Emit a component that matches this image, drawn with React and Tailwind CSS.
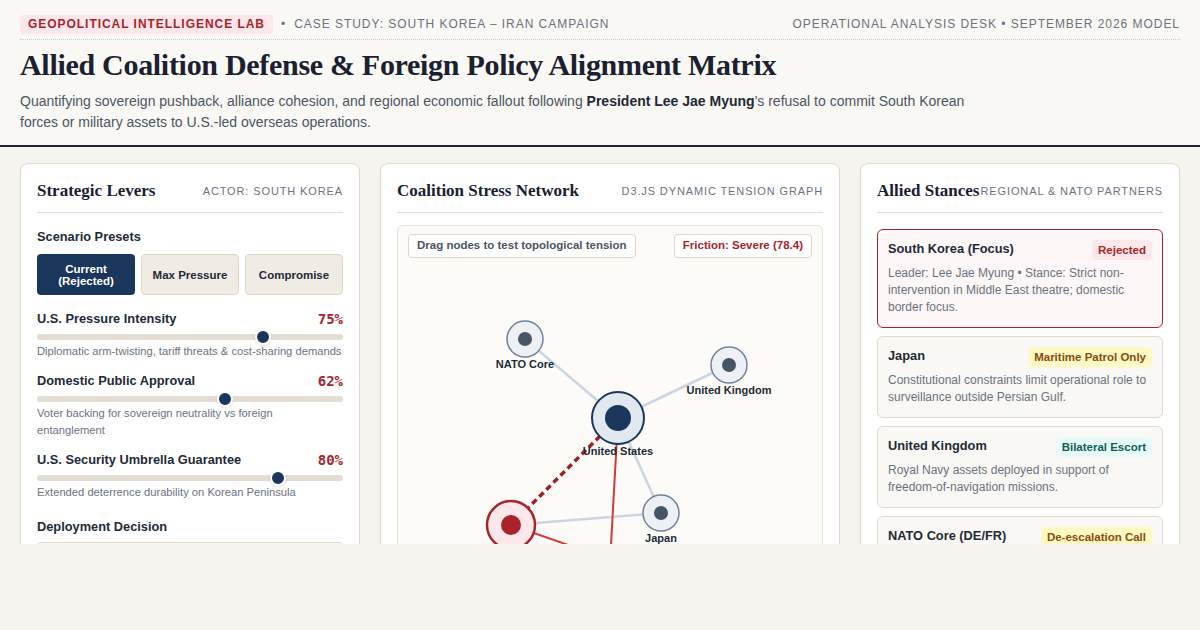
import React from "react";

const sans = { fontFamily: "'Liberation Sans', Arial, sans-serif" };
const serif = { fontFamily: "'Liberation Serif', 'Times New Roman', serif" };

const presets = ["Current (Rejected)", "Max Pressure", "Compromise"];

const levers = [
  {
    label: "U.S. Pressure Intensity",
    value: 75,
    note: "Diplomatic arm-twisting, tariff threats & cost-sharing demands",
  },
  {
    label: "Domestic Public Approval",
    value: 62,
    note: "Voter backing for sovereign neutrality vs foreign entanglement",
  },
  {
    label: "U.S. Security Umbrella Guarantee",
    value: 80,
    note: "Extended deterrence durability on Korean Peninsula",
  },
];

const stances = [
  {
    name: "South Korea (Focus)",
    badge: "Rejected",
    badgeCls: "bg-[#fce8ea] text-[#a8242b]",
    text: "Leader: Lee Jae Myung • Stance: Strict non-intervention in Middle East theatre; domestic border focus.",
    focus: true,
  },
  {
    name: "Japan",
    badge: "Maritime Patrol Only",
    badgeCls: "bg-[#fef9c3] text-[#854d0e]",
    text: "Constitutional constraints limit operational role to surveillance outside Persian Gulf.",
  },
  {
    name: "United Kingdom",
    badge: "Bilateral Escort",
    badgeCls: "bg-[#e6fbf7] text-[#115e59]",
    text: "Royal Navy assets deployed in support of freedom-of-navigation missions.",
  },
  {
    name: "NATO Core (DE/FR)",
    badge: "De-escalation Call",
    badgeCls: "bg-[#fef9c3] text-[#854d0e]",
    text: "Urging diplomatic off-ramps and multilateral de-escalation through E3 channels.",
  },
];

// graph positions, relative to the graph box
const nodes = [
  { id: "nato", label: "NATO Core", x: 127, y: 113, r: 18 },
  { id: "uk", label: "United Kingdom", x: 331, y: 139, r: 18 },
  { id: "us", label: "United States", x: 220, y: 192, r: 26, kind: "hub" },
  { id: "jp", label: "Japan", x: 263, y: 287, r: 18 },
  { id: "kr", label: "South Korea", x: 113, y: 299, r: 24, kind: "focus" },
  { id: "ir", label: "Iran", x: 330, y: 375, r: 22, kind: "focus" },
  { id: "gulf", label: "Gulf Shipping", x: 208, y: 410, r: 18 },
];

const links = [
  { a: "nato", b: "us", type: "soft" },
  { a: "uk", b: "us", type: "soft" },
  { a: "us", b: "jp", type: "soft" },
  { a: "kr", b: "jp", type: "soft" },
  { a: "kr", b: "us", type: "dash" },
  { a: "us", b: "gulf", type: "hot" },
  { a: "kr", b: "ir", type: "hot" },
];

function Card({ title, tag, children }) {
  return (
    <div className="bg-white border border-[#e0dacb] rounded-lg px-4 pt-4 h-[420px]">
      <div className="flex items-center justify-between pb-[10px] border-b border-[#e5dfd0]">
        <h2 className="whitespace-nowrap text-[17px] leading-[22px] font-bold text-[#1a2030]" style={serif}>
          {title}
        </h2>
        <span className="whitespace-nowrap text-[11px] tracking-[0.08em] uppercase text-[#6b7280]">{tag}</span>
      </div>
      {children}
    </div>
  );
}

function Graph() {
  const byId = Object.fromEntries(nodes.map((n) => [n.id, n]));
  return (
    <div className="relative mt-3 h-[360px] bg-[#fcfbf8] border border-[#e5e0d4] rounded-md">
      <svg className="absolute inset-0" width="425" height="360">
        {links.map((l, i) => {
          const a = byId[l.a];
          const b = byId[l.b];
          if (l.type === "soft")
            return <line key={i} x1={a.x} y1={a.y} x2={b.x} y2={b.y} stroke="#cbd5e1" strokeWidth="2.5" />;
          if (l.type === "dash")
            return <line key={i} x1={a.x} y1={a.y} x2={b.x} y2={b.y} stroke="#9b2226" strokeWidth="3.5" strokeDasharray="6 4" />;
          return <line key={i} x1={a.x} y1={a.y} x2={b.x} y2={b.y} stroke="#d23a3a" strokeWidth="2" />;
        })}
        {nodes.map((n) => {
          let fill = "#edf1f6", stroke = "#71829b", dot = "#475569", dr = 7;
          if (n.kind === "hub") { fill = "#e2e8f0"; stroke = "#1b365d"; dot = "#1b365d"; dr = 13; }
          if (n.kind === "focus") { fill = "#fce8ea"; stroke = "#a8242b"; dot = "#a8242b"; dr = 10; }
          return (
            <g key={n.id}>
              <circle cx={n.x} cy={n.y} r={n.r} fill={fill} stroke={stroke} strokeWidth={n.kind === "focus" ? 2.5 : n.kind === "hub" ? 2 : 1.5} />
              <circle cx={n.x} cy={n.y} r={dr} fill={dot} />
              {n.kind !== "focus" && (
                <text x={n.x} y={n.y + n.r + 11} textAnchor="middle" fontSize="11" fontWeight="700" fill="#1f2937" style={sans}>
                  {n.label}
                </text>
              )}
            </g>
          );
        })}
      </svg>
      <div className="absolute top-[8px] left-[10px] bg-white border border-[#ddd6c8] rounded px-2 h-[24px] flex items-center text-[11.5px] font-bold text-[#4b5563]">
        Drag nodes to test topological tension
      </div>
      <div className="absolute top-[8px] right-[10px] bg-white border border-[#ddd6c8] rounded px-2 h-[24px] flex items-center text-[11.5px] font-bold text-[#a8242b]">
        Friction: Severe (78.4)
      </div>
    </div>
  );
}

export default function App() {
  return (
    <div className="min-h-screen bg-[#f5f4ef] text-[#1f2937]" style={sans}>
      <header className="bg-[#f9f8f4] border-b-2 border-[#1f2433] px-5 pt-[15px] pb-[12px]">
        <div className="flex items-center justify-between pb-[5px] border-b border-dotted border-[#cfcabd]">
          <div className="flex items-center gap-[8px] text-[12px] leading-[15px] tracking-[0.08em] uppercase">
            <span className="bg-[#fce8ea] text-[#a8242b] font-bold px-2 py-[2px] rounded">Geopolitical Intelligence Lab</span>
            <span className="text-[#6b7280]">•</span>
            <span className="text-[#6b7280]">Case Study: South Korea – Iran Campaign</span>
          </div>
          <span className="text-[12px] leading-[15px] tracking-[0.08em] uppercase text-[#6b7280]">
            Operational Analysis Desk • September 2026 Model
          </span>
        </div>
        <h1 className="mt-[7px] text-[30px] leading-[36px] tracking-[-0.01em] font-bold text-[#1a2030]" style={serif}>
          Allied Coalition Defense &amp; Foreign Policy Alignment Matrix
        </h1>
        <p className="mt-[8px] max-w-[980px] text-[14px] leading-[21px] text-[#4b5563]">
          Quantifying sovereign pushback, alliance cohesion, and regional economic fallout following{" "}
          <b className="text-[#1f2937]">President Lee Jae Myung</b>'s refusal to commit South Korean forces or military assets to U.S.-led overseas operations.
        </p>
      </header>

      <div className="h-[397px] overflow-hidden px-5 pt-[16px]">
        <div className="grid grid-cols-[340px_1fr_320px] gap-5">
          <Card title="Strategic Levers" tag="Actor: South Korea">
            <div className="mt-4 text-[12.8px] leading-4 font-bold">Scenario Presets</div>
            <div className="mt-[9px] grid grid-cols-3 gap-[6px]">
              {presets.map((p, i) => (
                <button
                  key={p}
                  className={
                    i === 0
                      ? "h-[41px] rounded px-2 text-[11.5px] leading-[12px] font-bold bg-[#1b365d] text-white"
                      : "h-[41px] rounded px-2 text-[11.5px] leading-[12px] font-bold bg-[#f0ece4] border border-[#ddd6c8] text-[#1f2937]"
                  }
                >
                  {p}
                </button>
              ))}
            </div>
            {levers.map((l, i) => (
              <div key={l.label} className={i === 0 ? "mt-4" : "mt-[13px]"}>
                <div className="flex items-end justify-between">
                  <span className="text-[12.8px] leading-4 font-bold">{l.label}</span>
                  <span className="text-[14px] leading-4 font-bold text-[#a8242b]" style={{ fontFamily: "'DejaVu Sans Mono', monospace" }}>
                    {l.value}%
                  </span>
                </div>
                <div className="relative mt-[7px] h-[6px] rounded-full bg-[#e2ddd2]">
                  <div
                    className="absolute top-1/2 w-[16px] h-[16px] -mt-[8px] -ml-[8px] rounded-full bg-[#1b365d] border-2 border-white shadow"
                    style={{ left: `calc(7px + ${l.value / 100} * (100% - 14px))` }}
                  />
                </div>
                <p className="mt-[3px] text-[11.2px] leading-[17px] text-[#6b7280]">{l.note}</p>
              </div>
            ))}
            <div className="mt-[18px] text-[12.8px] leading-4 font-bold">Deployment Decision</div>
            <div className="mt-[7px] h-[40px] rounded border border-[#ddd6c8] bg-[#faf9f6]" />
          </Card>

          <Card title="Coalition Stress Network" tag="D3.js Dynamic Tension Graph">
            <Graph />
          </Card>

          <Card title="Allied Stances" tag="Regional & NATO Partners">
            <div className="mt-4 flex flex-col gap-2">
              {stances.map((s) => (
                <div
                  key={s.name}
                  className={
                    s.focus
                      ? "rounded-md border border-[#a8242b] bg-[#fdf7f7] px-[10px] pt-[10px] pb-[11px]"
                      : "rounded-md border border-[#e0dacb] bg-[#f9f8f4] px-[10px] pt-[10px] pb-[11px]"
                  }
                >
                  <div className="flex items-start justify-between">
                    <span className="text-[12.8px] leading-[17px] font-bold text-[#1f2937]">{s.name}</span>
                    <span className={"rounded px-[6px] py-[3px] text-[11.5px] leading-[14px] font-bold " + s.badgeCls}>{s.badge}</span>
                  </div>
                  <p className="mt-[5px] text-[12px] leading-[17px] text-[#6b7280]">{s.text}</p>
                </div>
              ))}
            </div>
          </Card>
        </div>
      </div>
    </div>
  );
}
